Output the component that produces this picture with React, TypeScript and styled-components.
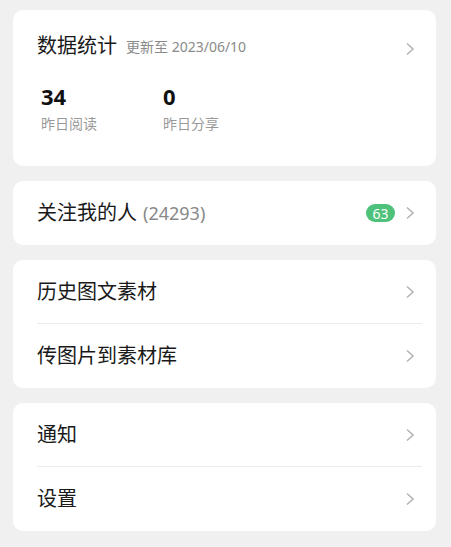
import React, { FC } from 'react'
import styled, { createGlobalStyle } from 'styled-components'

const GlobalStyle = createGlobalStyle`
  body {
    margin: 0;
    background: #f0f0f0;
    font-family: "Noto Sans", "Noto Sans CJK SC", sans-serif;
    color: #191919;
  }
`

const Page = styled.div`
  display: flex;
  flex-direction: column;
  gap: 15px;
  padding: 10px 15px 14px 13px;
`

const Card = styled.div`
  background: #fff;
  border-radius: 10px;
`

const StatsCard = styled(Card)`
  padding: 22px 21px 32px 24px;
`

const TitleRow = styled.div`
  display: flex;
  align-items: center;
  height: 28px;
`

const Title = styled.span`
  font-size: 20px;
  line-height: 28px;
`

const SubTitle = styled.span`
  margin-left: 9px;
  font-size: 14px;
  color: #8a8a8a;
`

const Spacer = styled.div`
  flex: 1;
`

const StatsRow = styled.div`
  display: flex;
  margin-top: 22px;
  padding-left: 4px;
`

const Stat = styled.div`
  width: 122px;
  display: flex;
  flex-direction: column;
`

const StatValue = styled.span`
  height: 28px;
  font-size: 22px;
  font-weight: 700;
  line-height: 28px;
  color: #111;
`

const StatLabel = styled.span`
  height: 20px;
  font-size: 14px;
  line-height: 20px;
  margin-top: 4px;
  color: #9a9a9a;
`

const Row = styled.div<{ $divider?: boolean }>`
  position: relative;
  display: flex;
  align-items: center;
  height: 64px;
  padding: 0 21px 0 24px;
  ${(p) =>
    p.$divider &&
    `
    &::after {
      content: '';
      position: absolute;
      left: 24px;
      right: 14px;
      bottom: 0;
      height: 1px;
      background: #ececec;
    }
  `}
`

const RowLabel = styled.span`
  font-size: 20px;
  line-height: 28px;
`

const Count = styled.span`
  margin-left: 6px;
  font-size: 18px;
  color: #888;
`

const Badge = styled.span`
  display: inline-flex;
  align-items: center;
  justify-content: center;
  width: 29px;
  height: 18px;
  border-radius: 9px;
  background: #4ec27a;
  color: #fff;
  font-size: 14px;
  margin-right: 10px;
`

const ChevronWrap = styled.span<{ $offset?: number }>`
  display: flex;
  margin-top: ${(p) => p.$offset || 0}px;
`

const Chevron: FC<{ offset?: number }> = ({ offset }) => (
  <ChevronWrap $offset={offset}>
    <svg width="10" height="14" viewBox="0 0 10 14">
      <polyline points="2,1.5 8,7 2,12.5" fill="none" stroke="#b4b4b4" strokeWidth="1.6" />
    </svg>
  </ChevronWrap>
)

const App: FC = () => {
  return (
    <>
      <GlobalStyle />
      <Page>
        <StatsCard>
          <TitleRow>
            <Title>数据统计</Title>
            <SubTitle>更新至 2023/06/10</SubTitle>
            <Spacer />
            <Chevron offset={6} />
          </TitleRow>
          <StatsRow>
            <Stat>
              <StatValue>34</StatValue>
              <StatLabel>昨日阅读</StatLabel>
            </Stat>
            <Stat>
              <StatValue>0</StatValue>
              <StatLabel>昨日分享</StatLabel>
            </Stat>
          </StatsRow>
        </StatsCard>

        <Card>
          <Row>
            <RowLabel>关注我的人</RowLabel>
            <Count>(24293)</Count>
            <Spacer />
            <Badge>63</Badge>
            <Chevron />
          </Row>
        </Card>

        <Card>
          <Row $divider>
            <RowLabel>历史图文素材</RowLabel>
            <Spacer />
            <Chevron />
          </Row>
          <Row>
            <RowLabel>传图片到素材库</RowLabel>
            <Spacer />
            <Chevron />
          </Row>
        </Card>

        <Card>
          <Row $divider>
            <RowLabel>通知</RowLabel>
            <Spacer />
            <Chevron />
          </Row>
          <Row>
            <RowLabel>设置</RowLabel>
            <Spacer />
            <Chevron />
          </Row>
        </Card>
      </Page>
    </>
  )
}

export default App
